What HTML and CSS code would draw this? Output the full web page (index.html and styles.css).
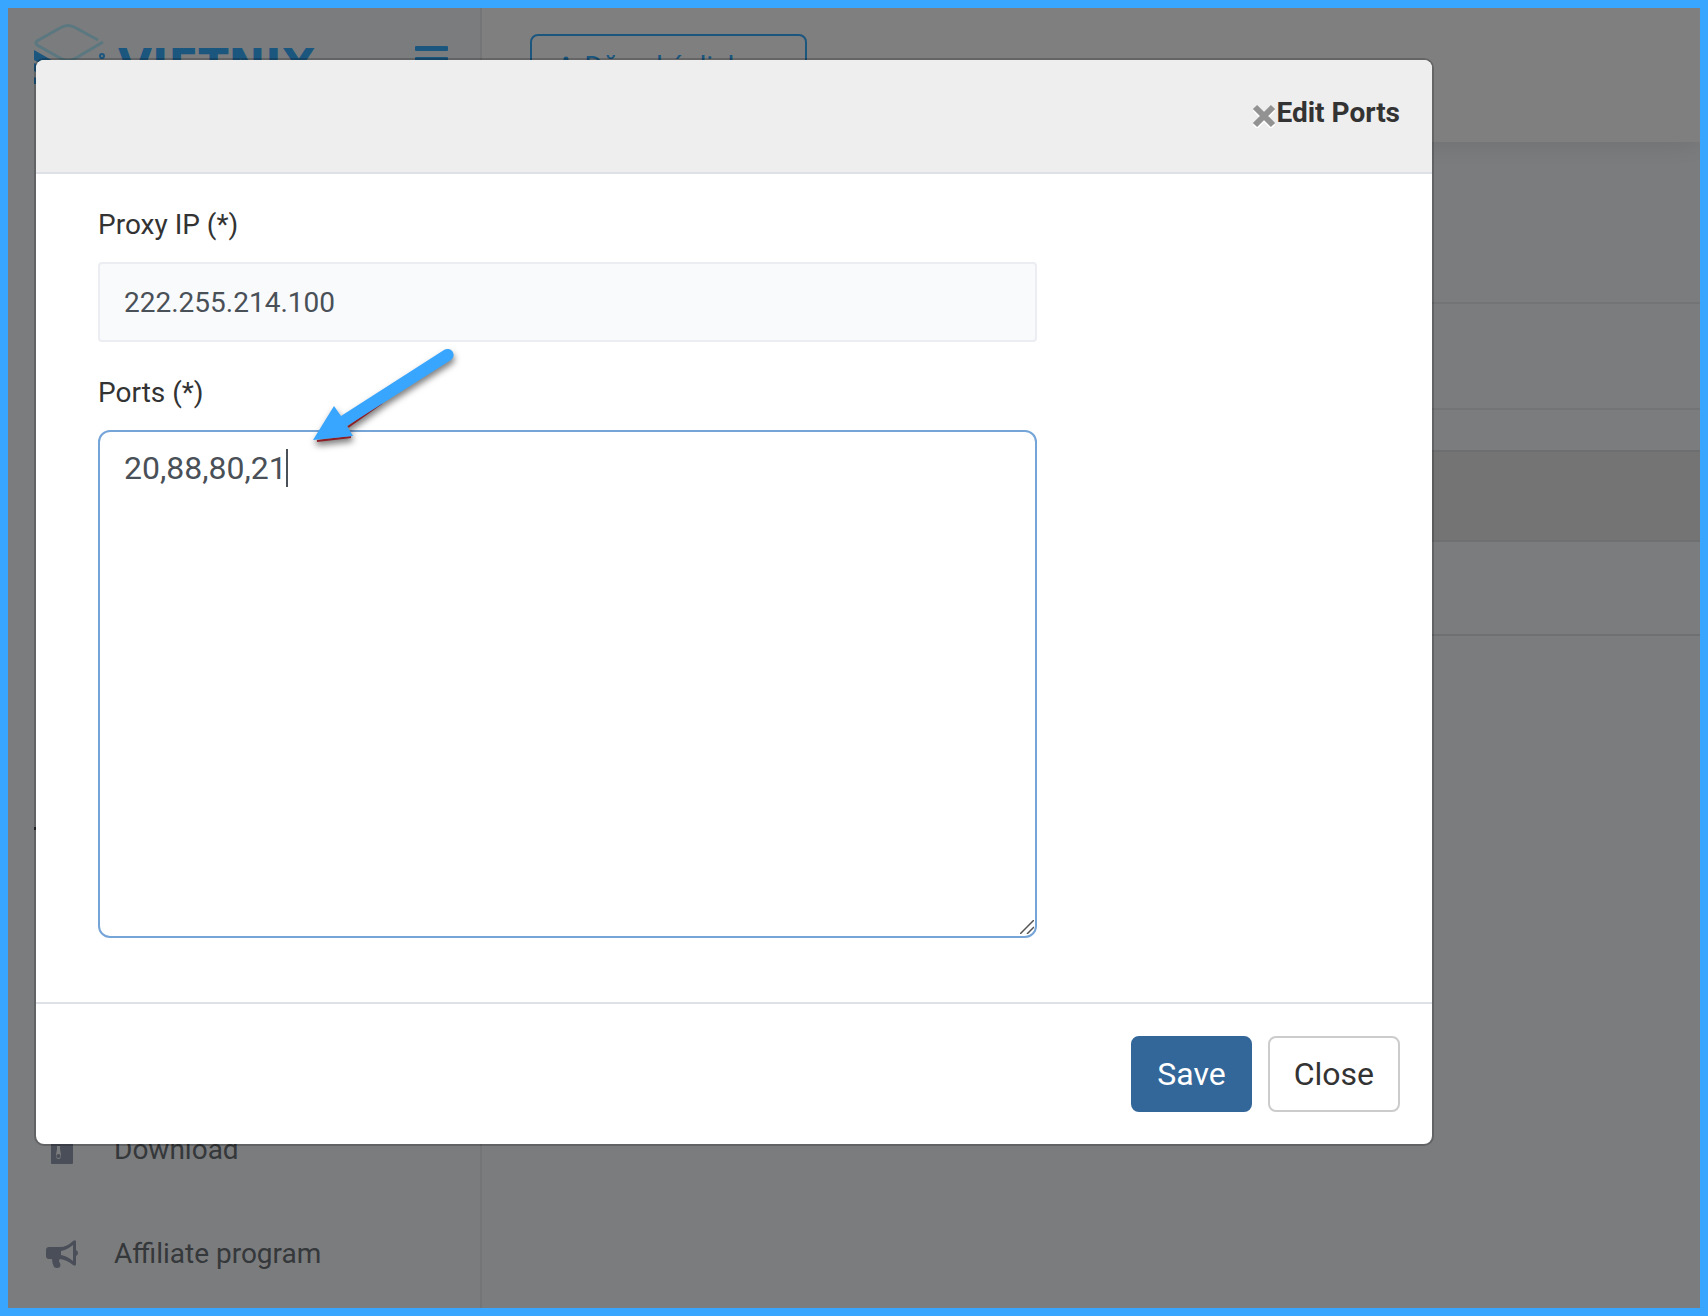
FILE: index.html
```html
<!DOCTYPE html>
<html lang="en">
<head>
  <meta charset="UTF-8">
  <meta name="viewport" content="width=device-width, initial-scale=1.0">
  <title>Edit Ports</title>
  <link rel="stylesheet" href="styles.css">
</head>
<body>

  <div class="app">
    <aside class="sidebar">
      <div class="brand">
        <svg class="brand-logo" width="72" height="66" viewBox="0 0 72 66" fill="none">
          <path d="M64 18 L42 6 Q34 1 26 6 L3 19 Q1 21 3 23 L26 36 Q34 41 42 36 L69 20" stroke="#b6eeff" stroke-width="3"/>
          <circle cx="68" cy="34" r="2" stroke="#36acff" stroke-width="2"/>
          <path d="M0 28 L35 48 L64 38 L64 42 L35 56 L0 38Z M0 41 L35 58 L35 64 L0 49Z M0 55 L18 62 L0 62Z" fill="#36acff"/>
        </svg>
        <span class="brand-name">VIETNIX</span>
        <button class="menu-toggle" type="button" aria-label="Menu">
          <span></span><span></span><span></span>
        </button>
      </div>

      <nav class="menu">
        <span class="menu-mark"></span>
        <a href="#" class="menu-item">
          <svg class="menu-icon" width="32" height="32" viewBox="0 0 32 32">
            <path fill="currentColor" fill-rule="evenodd" d="M5 3 Q5 2 6 2 H19 L27 10 V29 Q27 30 26 30 H6 Q5 30 5 29Z M11 12 V15 L10 21 Q10 25 12.500 25 Q15 25 15 21 L14 15 V12Z M12.500 20 A2 2 0 1 1 12.400 20Z"/>
          </svg>
          Download
        </a>
        <a href="#" class="menu-item">
          <svg class="menu-icon" width="32" height="32" viewBox="0 0 32 32">
            <path fill="currentColor" fill-rule="evenodd" d="M3 9 H14 Q21 9 27 3 Q30 1 30 4 V12 Q32 13 32 15 Q32 17 30 18 V26 Q30 29 27 27 Q21 22 14 21 Q12 23 14 25 Q15 27 14 29 Q11 31 8 29 Q6 25 6 21 H3 Q0 21 0 18 V12 Q0 9 3 9Z M27 7 Q21 12 15 13 V17 Q21 18 27 23Z"/>
          </svg>
          Affiliate program
        </a>
      </nav>
    </aside>

    <main class="main">
      <header class="topbar">
        <button class="register" type="button">
          <svg width="14" height="24" viewBox="0 0 14 24" fill="none" stroke="currentColor" stroke-width="5" stroke-linecap="round">
            <path d="M8 4 V18 M4 11 H12"/>
          </svg>
          Đăng ký dịch vụ
        </button>
      </header>
      <div class="panel panel-title"></div>
      <div class="panel panel-tools"></div>
      <div class="panel panel-head"></div>
      <div class="panel panel-row active"></div>
      <div class="panel panel-row"></div>
    </main>

    <div class="backdrop"></div>

    <div class="modal" role="dialog" aria-labelledby="modal-title">
      <div class="modal-header">
        <button class="modal-x" type="button" aria-label="Dismiss">
          <svg width="24" height="24" viewBox="0 0 24 24" stroke-width="6">
            <path d="M3 5 L21 23 M21 5 L3 23" stroke="#fff"/>
            <path d="M3 3 L21 21 M21 3 L3 21" stroke="#929292"/>
          </svg>
        </button>
        <h4 class="modal-title" id="modal-title">Edit Ports</h4>
      </div>

      <form class="modal-body">
        <div class="field">
          <label for="proxy-ip">Proxy IP (*)</label>
          <input class="form-control" id="proxy-ip" type="text" value="222.255.214.100" readonly>
        </div>
        <div class="field">
          <label for="ports">Ports (*)</label>
          <div class="ports-box">
            <textarea class="form-area" id="ports" rows="10" spellcheck="false">20,88,80,21</textarea>
            <span class="caret"></span>
            <svg class="grip" width="14" height="14" viewBox="0 0 14 14" stroke="#555" stroke-width="1.500">
              <path d="M0 14 L14 0 M7 14 L14 7"/>
            </svg>
          </div>
        </div>
      </form>

      <div class="modal-footer">
        <button class="btn btn-primary" type="button">Save</button>
        <button class="btn btn-default" type="button">Close</button>
      </div>
    </div>

    <!-- pointer to the ports field -->
    <svg class="pointer" width="170" height="120" viewBox="0 0 170 120">
      <path d="M17 101 L51 97 M48 87 L82 63" fill="none" stroke="#8e1f26" stroke-width="2"/>
      <path d="M13 100 L34 66 L41 76 L144 10 A6 6 0 0 1 151 20 L47 86 L53 96Z" fill="#38a5ff"/>
    </svg>
  </div>

</body>
</html>
```

FILE: styles.css
```css
* {
  box-sizing: border-box;
}

body {
  margin: 0;
  font-family: Roboto, "Liberation Sans", sans-serif;
  font-size: 28px;
  line-height: 42px;
  color: #333;
}

button,
input,
textarea {
  font-family: inherit;
}

button {
  cursor: pointer;
}

.app {
  position: relative;
  display: flex;
  min-height: 100vh;
  border: 8px solid #38a5ff;
  background: #f7f9fc;
  overflow: hidden;
}

/* sidebar */
.sidebar {
  position: relative;
  z-index: 1;
  display: flex;
  flex-direction: column;
  flex: 0 0 474px;
  border-right: 2px solid #e8eaec;
  background: #f7f9fc;
}

.brand {
  display: flex;
  align-items: flex-start;
  padding: 14px 32px 0 26px;
}

.brand-name {
  margin: 23px 0 0 12px;
  font-family: "DejaVu Sans", sans-serif;
  font-size: 44px;
  font-weight: bold;
  color: #36acff;
}

.menu-toggle {
  display: flex;
  flex-direction: column;
  gap: 6px;
  width: 33px;
  margin: 24px 0 0 auto;
  padding: 0;
  border: 0;
  background: none;
}

.menu-toggle span {
  height: 5px;
  border-radius: 1px;
  background: #36acff;
}

.menu {
  display: flex;
  flex-direction: column;
  margin-top: auto;
  padding-bottom: 2px;
}

.menu-mark {
  width: 2px;
  height: 3px;
  margin: 0 0 268px 26px;
  background: #555;
}

.menu-item {
  display: flex;
  align-items: center;
  gap: 36px;
  height: 104px;
  padding-left: 38px;
  color: #6b7075;
  text-decoration: none;
}

.menu-icon {
  color: #949cb0;
}

/* page behind the dialog */
.main {
  flex: 1;
}

.topbar {
  position: relative;
  height: 134px;
  padding: 26px 48px;
  background: #fff;
  box-shadow: 0 0 28px rgba(0, 0, 0, 0.12);
}

.register {
  display: flex;
  align-items: center;
  gap: 12px;
  padding: 10px 26px;
  border: 2px solid #36acff;
  border-radius: 8px;
  background: none;
  font-size: 28px;
  line-height: 42px;
  color: #36acff;
}

.panel {
  border-bottom: 2px solid #e6e8ec;
}

.panel-title {
  height: 162px;
}

.panel-tools {
  height: 106px;
}

.panel-head {
  height: 42px;
  border-color: #dadce0;
}

.panel-row {
  height: 94px;
  border-color: #dee0e4;
}

.panel-row.active {
  height: 90px;
  background: #e9e9e9;
}

.backdrop {
  position: absolute;
  inset: 0;
  z-index: 2;
  background: rgba(0, 0, 0, 0.5);
}

/* dialog */
.modal {
  position: absolute;
  top: 50px;
  left: 26px;
  z-index: 3;
  width: calc(100% - 292px);
  border: 2px solid rgba(0, 0, 0, 0.2);
  border-radius: 10px;
  background: #fff;
  background-clip: padding-box;
}

.modal-header {
  display: flex;
  justify-content: flex-end;
  align-items: flex-start;
  padding: 32px;
  border-bottom: 2px solid #dee2e6;
  border-radius: 8px 8px 0 0;
  background: #eee;
}

.modal-x {
  display: flex;
  align-items: center;
  height: 48px;
  padding: 0;
  border: 0;
  background: none;
}

.modal-title {
  margin: 0;
  font-size: 28px;
  font-weight: bold;
}

.modal-body {
  padding: 30px 32px 64px;
}

.field {
  width: 75%;
  padding: 0 30px;
}

.field + .field {
  margin-top: 30px;
}

.field label {
  display: block;
  margin-bottom: 16px;
}

.form-control,
.form-area {
  display: block;
  width: 100%;
  padding: 0 24px;
  border: 2px solid #ebedf2;
  color: #495057;
  outline: 0;
}

.form-control {
  height: 80px;
  border-radius: 4px;
  background: #f9fafc;
  font-size: 28px;
}

.ports-box {
  position: relative;
}

.form-area {
  padding: 12px 24px;
  border-color: #75a5d8;
  border-radius: 12px;
  background: #fff;
  font-size: 32px;
  line-height: 48px;
  resize: none;
}

.caret {
  position: absolute;
  top: 19px;
  left: 188px;
  width: 2px;
  height: 38px;
  background: #495057;
}

.grip {
  position: absolute;
  right: 3px;
  bottom: 4px;
}

.modal-footer {
  display: flex;
  justify-content: flex-end;
  gap: 16px;
  padding: 32px;
  border-top: 2px solid #dee2e6;
}

.btn {
  padding: 12px 24px;
  border: 2px solid #ccc;
  border-radius: 8px;
  background: #fff;
  font-size: 32px;
  line-height: 48px;
  color: #333;
}

.btn-primary {
  border-color: #336699;
  background: #336699;
  color: #fff;
}

.pointer {
  position: absolute;
  top: 332px;
  left: 292px;
  z-index: 4;
  filter: drop-shadow(1px 4px 3px rgba(0, 0, 0, 0.5));
}
```
